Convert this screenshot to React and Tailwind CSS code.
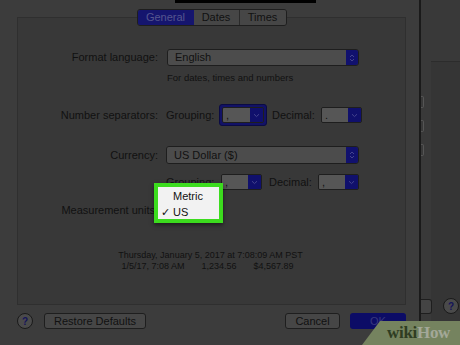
import React from 'react';

function Combo({ value, width, focused }) {
  const box = (
    <div className="flex h-[16px] border border-[#1e1e1e] rounded-[2px] overflow-hidden" style={{ width }}>
      <div className="flex-1 bg-[#565656] text-[11px] leading-[14px] pl-[3px] text-[#111]">{value}</div>
      <div className="w-[13px] bg-[#10106c] flex items-center justify-center">
        <svg width="7" height="5" viewBox="0 0 7 5">
          <path d="M1 1.2 L3.5 3.6 L6 1.2" fill="none" stroke="#44448e" strokeWidth="1" />
        </svg>
      </div>
    </div>
  );
  if (!focused) return box;
  return <div className="p-[2px] rounded-[3px] bg-[#121266] border border-[#0b0b44]">{box}</div>;
}

function PopUp({ value, width, height }) {
  return (
    <div className="flex border border-[#1e1e1e] rounded-[3px] overflow-hidden" style={{ width, height }}>
      <div className="flex-1 bg-[#4c4c4c] text-[11px] pl-[7px] flex items-center text-[#111]">{value}</div>
      <div className="w-[12px] bg-[#11116e] flex items-center justify-center">
        <svg width="6" height="10" viewBox="0 0 6 10">
          <path d="M1 4 L3 2 L5 4 M1 6 L3 8 L5 6" fill="none" stroke="#44448e" strokeWidth="1" />
        </svg>
      </div>
    </div>
  );
}

function Label({ children }) {
  return <div className="w-[142px] text-right text-[11px] pr-[2px] text-[#111]">{children}</div>;
}

function Tabs() {
  return (
    <div className="relative z-10 flex h-[17px] w-[150px] mx-auto text-[11px] border border-[#1e1e1e] rounded-[3px] overflow-hidden">
      <div className="w-[56px] bg-[#15156e] text-[#55558e] flex items-center justify-center">General</div>
      <div className="w-[46px] bg-[#464646] text-[#111] flex items-center justify-center border-r border-[#2a2a2a]">Dates</div>
      <div className="flex-1 bg-[#464646] text-[#111] flex items-center justify-center">Times</div>
    </div>
  );
}

function Panel() {
  return (
    <div className="-mt-[9px] w-[389px] h-[288px] border border-[#2f2f2f] bg-[#383838] flex flex-col">
      <div className="mt-[31px] flex items-center h-[17px]">
        <Label>Format language:</Label>
        <div className="ml-[7px]">
          <PopUp value="English" width={192} height={17} />
        </div>
      </div>
      <div className="mt-[6px] ml-[149px] text-[9.5px] leading-[12px] text-[#111]">For dates, times and numbers</div>

      <div className="mt-[21px] flex items-center h-[20px]">
        <Label>Number separators:</Label>
        <div className="ml-[6px] text-[11px] w-[47px]">Grouping:</div>
        <div className="ml-[6px]">
          <Combo value="," width={42} focused />
        </div>
        <div className="ml-[5px] text-[11px] w-[49px]">Decimal:</div>
        <Combo value="." width={41} />
      </div>

      <div className="mt-[21px] flex items-center h-[18px]">
        <Label>Currency:</Label>
        <div className="ml-[6px]">
          <PopUp value="US Dollar ($)" width={193} height={18} />
        </div>
      </div>

      <div className="mt-[10px] flex items-center h-[16px]">
        <div className="ml-[148px] text-[11px] w-[55px]">Grouping:</div>
        <Combo value="," width={41} />
        <div className="ml-[7px] text-[11px] w-[49px]">Decimal:</div>
        <Combo value="," width={41} />
      </div>

      <div className="mt-[12px] flex items-center h-[16px]">
        <Label>Measurement units:</Label>
      </div>

      <div className="mt-[32px] text-center text-[9px] leading-[11px] text-[#111] pr-[2px]">
        <div>Thursday, January 5, 2017 at 7:08:09 AM PST</div>
        <div className="flex justify-center gap-[17px] pr-[6px]">
          <span>1/5/17, 7:08 AM</span>
          <span>1,234.56</span>
          <span>$4,567.89</span>
        </div>
      </div>
    </div>
  );
}

function HelpButton() {
  return (
    <div className="w-[16px] h-[16px] rounded-full border border-[#1a1a1a] bg-[#4a4a4a] flex items-center justify-center text-[10px] font-bold text-[#14145a]">
      ?
    </div>
  );
}

function Button({ children, width, blue }) {
  return (
    <div
      className={
        blue
          ? 'h-[16px] rounded-[3px] bg-[#0c0c66] text-[#38387e] text-[11px] flex items-center justify-center'
          : 'h-[16px] rounded-[3px] bg-[#464646] border border-[#1e1e1e] text-[#111] text-[11px] flex items-center justify-center'
      }
      style={{ width }}
    >
      {children}
    </div>
  );
}

function Dialog() {
  return (
    <div className="w-[421px] h-full shrink-0 bg-[#3c3c3c] border-r-2 border-[#1a1a1a] pl-[17px] flex flex-col">
      <div className="ml-[158px] w-[141px] h-[3px] bg-black" />
      <div className="mt-[6px] w-[389px]">
        <Tabs />
      </div>
      <Panel />
      <div className="mt-[8px] flex items-center w-[389px]">
        <HelpButton />
        <div className="ml-[11px]">
          <Button width={102}>Restore Defaults</Button>
        </div>
        <div className="ml-auto flex gap-[10px]">
          <Button width={55}>Cancel</Button>
          <Button width={56} blue>OK</Button>
        </div>
      </div>
    </div>
  );
}

function RightPane() {
  return (
    <div className="flex-1 h-full flex flex-col bg-[#393939]">
      <div className="h-[61px]" />
      <div className="flex-1 ml-[10px] border-t border-[#2c2c2c] bg-[#353535]" />
      <div className="absolute left-[421px] top-[96px] flex flex-col gap-[12px]">
        <div className="w-[3px] h-[12px] border border-l-0 border-[#555] rounded-r-[2px]" />
        <div className="w-[3px] h-[12px] border border-l-0 border-[#555] rounded-r-[2px]" />
        <div className="w-[3px] h-[12px] border border-l-0 border-[#555] rounded-r-[2px]" />
      </div>
      <div className="absolute left-[421px] top-[298px] flex items-center gap-[11px]">
        <div className="w-[11px] h-[15px] bg-[#444] border border-l-0 border-[#1e1e1e] rounded-r-[3px]" />
        <div className="w-[16px] h-[16px] rounded-full border border-[#1a1a1a] bg-[#4a4a4a] flex items-center justify-center text-[10px] font-bold text-[#14145a]">
          ?
        </div>
      </div>
    </div>
  );
}

function MeasureMenu() {
  return (
    <div className="absolute left-[154px] top-[183px] w-[69px] h-[40px] border-[4px] border-[#3cdc1e] bg-[#f2f2f2] text-[11px] text-[#111] leading-[16px] shadow-[0_2px_4px_rgba(0,0,0,0.5)]">
      <div className="pl-[15px] mt-[1px]">Metric</div>
      <div className="flex">
        <span className="w-[15px] pl-[3px]">✓</span>
        <span>US</span>
      </div>
    </div>
  );
}

function Watermark() {
  return (
    <div className="absolute left-[360px] top-[321px] w-[100px] h-[24px]">
      <svg className="absolute inset-0" width="100" height="24" viewBox="0 0 100 24">
        <polygon points="20,0 100,0 100,24 2,24" fill="#75835f" />
      </svg>
      <div className="absolute left-[27px] top-[1px] text-[17px] font-bold leading-[22px] font-['Liberation_Serif',serif] tracking-[-0.3px]">
        <span className="text-[#2f3d22]">wiki</span>
        <span className="text-[#a3a898]">How</span>
      </div>
    </div>
  );
}

export default function App() {
  return (
    <div className="w-[460px] h-[345px] relative overflow-hidden flex bg-[#363636] font-['Liberation_Sans',Arial,sans-serif] text-[#111]">
      <Dialog />
      <RightPane />
      <MeasureMenu />
      <Watermark />
    </div>
  );
}
